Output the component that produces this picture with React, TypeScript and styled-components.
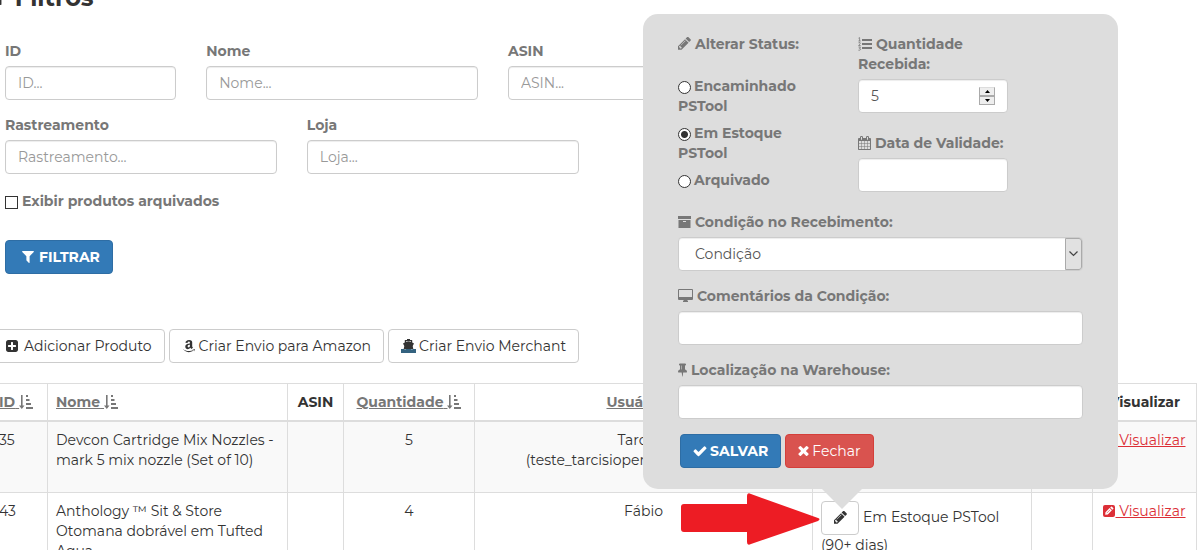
import React, { useState } from "react";
import styled, { createGlobalStyle, css } from "styled-components";
import { FaAmazon } from "react-icons/fa";

const GlobalStyle = createGlobalStyle`
  *, *::before, *::after { box-sizing: border-box; }
  body {
    margin: 0;
    background: #fff;
    color: #333;
    font: 14px/20px Montserrat, Inter, "Liberation Sans", sans-serif;
  }
  button, input, select { font: inherit; }
`;

/* ---------- icons ---------- */

const Svg = styled.svg<{ $w: number }>`
  width: ${(p) => p.$w}px;
  height: 14px;
  vertical-align: -2px;
  fill: currentColor;
  flex: none;
`;

const FilterIcon = ({ w = 12 }: { w?: number }) => (
  <Svg $w={w} viewBox="192 128 1408 1664" aria-hidden>
    <path d="M1595 295q17 41-14 70l-493 493v742q0 42-39 59-13 5-25 5-27 0-45-19l-256-256q-19-19-19-45v-486l-493-493q-31-29-14-70 17-39 59-39h1280q42 0 59 39z" />
  </Svg>
);
const PencilIcon = () => (
  <Svg $w={13} viewBox="128 192 1536 1600" aria-hidden>
    <path d="M491 1536l91-91-235-235-91 91v107h128v128h107zm523-928q0-22-22-22-10 0-17 7l-542 542q-7 7-7 17 0 22 22 22 10 0 17-7l542-542q7-7 7-17zm-54-192l416 416-832 832h-416v-416zm683 96q0 53-37 90l-166 166-416-416 166-165q36-38 90-38 53 0 91 38l235 234q37 39 37 91z" />
  </Svg>
);
const CheckIcon = () => (
  <Svg $w={14} viewBox="64 64 1664 1664" aria-hidden>
    <path d="M1671 566q0 40-28 68l-724 724-136 136q-28 28-68 28t-68-28l-136-136-362-362q-28-28-28-68t28-68l136-136q28-28 68-28t68 28l294 295 656-657q28-28 68-28t68 28l136 136q28 28 28 68z" />
  </Svg>
);
const TimesIcon = () => (
  <Svg $w={11} viewBox="256 192 1280 1536" aria-hidden>
    <path d="M1490 1322q0 40-28 68l-136 136q-28 28-68 28t-68-28l-294-294-294 294q-28 28-68 28t-68-28l-136-136q-28-28-28-68t28-68l294-294-294-294q-28-28-28-68t28-68l136-136q28-28 68-28t68 28l294 294 294-294q28-28 68-28t68 28l136 136q28 28 28 68t-28 68l-294 294 294 294q28 28 28 68z" />
  </Svg>
);
const CalendarIcon = () => (
  <Svg $w={13} viewBox="64 0 1664 1792" aria-hidden>
    <path d="M192 1664h288v-288h-288v288zm352 0h320v-288h-320v288zm-352-352h288v-320h-288v320zm352 0h320v-320h-320v320zm-352-384h288v-288h-288v288zm736 736h320v-288h-320v288zm-384-736h320v-288h-320v288zm768 736h288v-288h-288v288zm-384-352h320v-320h-320v320zm-352-864v-288q0-13-9.5-22.5t-22.5-9.5h-64q-13 0-22.5 9.5t-9.5 22.5v288q0 13 9.5 22.5t22.5 9.5h64q13 0 22.5-9.5t9.5-22.5zm736 864h288v-320h-288v320zm-384-384h320v-288h-320v288zm384 0h288v-288h-288v288zm32-480v-288q0-13-9.5-22.5t-22.5-9.5h-64q-13 0-22.5 9.5t-9.5 22.5v288q0 13 9.5 22.5t22.5 9.5h64q13 0 22.5-9.5t9.5-22.5zm384-64v1280q0 52-38 90t-90 38h-1408q-52 0-90-38t-38-90v-1280q0-52 38-90t90-38h128v-96q0-66 47-113t113-47h64q66 0 113 47t47 113v96h384v-96q0-66 47-113t113-47h64q66 0 113 47t47 113v96h128q52 0 90 38t38 90z" />
  </Svg>
);
const TackIcon = () => (
  <Svg $w={9} viewBox="320 64 1152 1792" aria-hidden>
    <path d="M800 864v-448q0-14-9-23t-23-9-23 9-9 23v448q0 14 9 23t23 9 23-9 9-23zm672 352q0 26-19 45t-45 19h-429l-51 483q-2 12-10.5 20.5t-20.5 8.5h-1q-27 0-32-27l-76-485h-404q-26 0-45-19t-19-45q0-123 78.5-221.5t177.5-98.5v-512q-52 0-90-38t-38-90 38-90 90-38h640q52 0 90 38t38 90-38 90-90 38v512q99 0 177.5 98.5t78.5 221.5z" />
  </Svg>
);
const PlusSquareIcon = () => (
  <Svg $w={12} viewBox="128 0 1536 1792" aria-hidden>
    <path d="M1408 960v-128q0-26-19-45t-45-19h-320v-320q0-26-19-45t-45-19h-128q-26 0-45 19t-19 45v320h-320q-26 0-45 19t-19 45v128q0 26 19 45t45 19h320v320q0 26 19 45t45 19h128q26 0 45-19t19-45v-320h320q26 0 45-19t19-45zm256-544v960q0 119-84.5 203.5t-203.5 84.5h-960q-119 0-203.5-84.5t-84.5-203.5v-960q0-119 84.5-203.5t203.5-84.5h960q119 0 203.5 84.5t84.5 203.5z" />
  </Svg>
);
const ListIcon = () => (
  <Svg $w={14} viewBox="0 0 14 14" aria-hidden>
    <path d="M4 2h10v2H4zM4 6h10v2H4zM4 10h10v2H4z" />
    <path
      d="M.5 1.2L1.6.6V4M.4 4h2.3M.5 5.8q1.8-1 1.8.3Q2.2 7 .6 8.5h2M.5 10h2L1.4 11.4q1.2 0 1.2 1T.4 13.2"
      fill="none"
      stroke="currentColor"
      strokeWidth="0.8"
    />
  </Svg>
);
const ArchiveIcon = () => (
  <Svg $w={13} viewBox="0 0 13 14" aria-hidden>
    <path d="M0 1h13v3H0zM.5 5h12v8H.5zM5 6v1h3V6z" fillRule="evenodd" />
  </Svg>
);
const DesktopIcon = () => (
  <Svg $w={15} viewBox="0 0 15 14" aria-hidden>
    <path
      d="M1 0h13q1 0 1 1v9q0 1-1 1H9.5v1h.5v1H5v-1h.5v-1H1q-1 0-1-1V1q0-1 1-1zm0 1v7h13V1z"
      fillRule="evenodd"
    />
  </Svg>
);
const SortIcon = () => (
  <Svg $w={14} viewBox="0 0 14 14" aria-hidden>
    <path d="M2 0h1.6v10.5H5.5L2.8 14 0 10.5h2zM7 0h2v2H7zM7 4h3.5v2H7zM7 8h5v2H7zM7 12h7v2H7z" />
  </Svg>
);
const EditSquareIcon = () => (
  <Svg $w={12} viewBox="0 0 12 14" aria-hidden>
    <path d="M2 1h8q2 0 2 2v8q0 2-2 2H2q-2 0-2-2V3q0-2 2-2z" />
    <path d="M2.2 10.8l.3-2.6L6.6 4l2.3 2.3-4.1 4.2zM7.2 3.5l.8-.8q.5-.4 1 0l1.2 1.2q.5.5 0 1l-.7.8z" fill="#fff" />
    <path d="M3.8 9.1l3.4-3.4" stroke="currentColor" strokeWidth="0.6" />
  </Svg>
);
const ShipIcon = () => (
  <Svg $w={15} viewBox="0 0 15 14" aria-hidden>
    <path d="M6 0h3v1h2.2v2.6L13 4.6 11.7 7l.6 3H2.7l.6-3L2 4.6l1.8-1V1H6z" />
    <path d="M5 2.2h5v.9L7.5 2.4 5 3.1z" fill="#fff" />
    <path d="M0 10h3l1 .6 1.5-.6h4l1.5.6 1-.6h3v4H0z" fill="#33627f" />
  </Svg>
);

/* ---------- page ---------- */

const Page = styled.main`
  height: 100vh;
  overflow: hidden;
  padding-right: 6px;
`;
const Shifted = styled.div`
  margin-left: -10px;
`;
const Title = styled.h2`
  margin: -19px 0 0;
  padding: 0 0 26px;
  font-size: 24px;
  line-height: 34px;
  font-weight: 700;
  white-space: nowrap;
  svg { height: 24px; }
`;
const Row = styled.div`
  display: grid;
  grid-template-columns: repeat(12, minmax(0, 1fr));
`;
const Col = styled.div<{ $span: number }>`
  grid-column: span ${(p) => p.$span};
  padding: 0 15px;
`;
const Group = styled.div`
  margin-bottom: 15px;
`;
const Label = styled.label`
  display: block;
  margin-bottom: 5px;
  font-weight: 700;
  color: #777;
`;
const field = css`
  width: 100%;
  height: 34px;
  border: 1px solid #ccc;
  border-radius: 4px;
  background: #fff;
  color: #555;
  box-shadow: inset 0 1px 1px rgba(0, 0, 0, 0.075);
`;
const Input = styled.input`
  ${field}
  display: block;
  padding: 6px 12px;
  &::placeholder { color: #999; opacity: 1; }
`;
const CheckLabel = styled.label`
  display: flex;
  align-items: center;
  gap: 4px;
  margin: 2px 15px 29px;
  font-weight: 700;
  color: #777;
`;
const Checkbox = styled.input`
  appearance: none;
  width: 13px;
  height: 13px;
  margin: 2px 0 0;
  border: 1px solid #333;
  background: #fff;
  &:checked { background: #333; }
`;
const Button = styled.button<{ $kind?: "primary" | "danger"; $gap?: number }>`
  height: 34px;
  padding: 0 12px;
  display: inline-flex;
  align-items: center;
  justify-content: center;
  gap: ${(p) => p.$gap ?? 3}px;
  border: 1px solid #ccc;
  border-radius: 4px;
  background: #fff;
  color: #333;
  white-space: nowrap;
  cursor: pointer;
  ${(p) => p.$kind === "primary" && css`
    background: #337ab7; border-color: #2e6da4; color: #fff; font-weight: 700;
  `}
  ${(p) => p.$kind === "danger" && css`
    background: #d9534f; border-color: #d43f3a; color: #fff;
  `}
`;
const FilterButton = styled(Button)`
  padding-left: 16px;
`;
const Actions = styled.div`
  padding-left: 15px;
`;
const Toolbar = styled.div`
  display: flex;
  gap: 4px;
  padding: 55px 0 20px 3px;
`;

/* ---------- table ---------- */

const Table = styled.table`
  width: 100%;
  table-layout: fixed;
  border-collapse: collapse;
`;
const Column = styled.col<{ $w?: number }>`
  width: ${(p) => (p.$w ? `${p.$w}px` : "auto")};
`;
const Th = styled.th<{ $left?: boolean }>`
  padding: 8px;
  border: 1px solid #ddd;
  border-bottom-width: 2px;
  text-align: ${(p) => (p.$left ? "left" : "center")};
  white-space: nowrap;
`;
const Td = styled.td<{ $left?: boolean }>`
  height: 71px;
  padding: 8px;
  border: 1px solid #ddd;
  text-align: ${(p) => (p.$left ? "left" : "center")};
  vertical-align: top;
`;
const Tr = styled.tr<{ $striped?: boolean }>`
  background: ${(p) => (p.$striped ? "#f9f9f9" : "#fff")};
`;
const SortLink = styled.a`
  color: #777;
  text-decoration: underline;
  white-space: pre;
`;
const ViewLink = styled.a`
  color: #dc2f37;
  text-decoration: underline;
  white-space: pre;
`;

/* ---------- status popover ---------- */

const Anchor = styled.span`
  position: relative;
  display: inline-block;
  margin-right: 4px;
`;
const EditButton = styled(Button)`
  width: 38px;
  padding: 0;
  vertical-align: middle;
`;
const Popover = styled.form`
  position: absolute;
  z-index: 2;
  bottom: calc(100% + 12px);
  left: -178px;
  width: 475px;
  padding: 20px 35px 21px;
  border-radius: 15px;
  background: #ddd;
  text-align: left;
  &::after {
    content: "";
    position: absolute;
    top: 100%;
    left: 179px;
    border: 20px solid transparent;
    border-top-color: #ddd;
    border-bottom: 0;
  }
`;
const PopoverTop = styled.div`
  display: flex;
  gap: 30px;
  margin-bottom: 5px;
`;
const Half = styled.div`
  width: 150px;
`;
const Choices = styled.fieldset`
  width: 150px;
  margin: 0;
  padding: 0;
  border: 0;
`;
const Legend = styled.legend`
  padding: 0;
  margin-bottom: 22px;
  font-weight: 700;
  color: #777;
`;
const Choice = styled.label`
  display: block;
  width: 130px;
  margin-bottom: 7px;
  font-weight: 700;
  color: #777;
`;
const Radio = styled.input`
  appearance: none;
  width: 13px;
  height: 13px;
  margin: 0 3px 0 0;
  border: 1px solid #333;
  border-radius: 50%;
  background: #fff;
  vertical-align: -3px;
  &:checked { background: radial-gradient(circle, #333 0 3px, #fff 4px); }
`;
const NumberField = styled.div`
  ${field}
  display: flex;
  align-items: center;
  margin-bottom: 20px;
  padding: 0 12px;
`;
const NumberInput = styled.input`
  flex: 1;
  min-width: 0;
  padding: 0;
  border: 0;
  outline: 0;
  background: none;
  color: inherit;
  appearance: textfield;
  &::-webkit-inner-spin-button { appearance: none; }
`;
const Stepper = styled.div`
  display: grid;
  width: 16px;
`;
const Step = styled.button<{ $down?: boolean }>`
  display: grid;
  place-items: center;
  height: 9px;
  padding: 0;
  border: 1px solid #aaa;
  ${(p) => !p.$down && css`border-top-color: #ddd;`}
  background: #eee;
  svg {
    display: block;
    transform: ${(p) => (p.$down ? "rotate(180deg)" : "none")};
  }
`;
const SelectBox = styled.div`
  position: relative;
`;
const Select = styled.select`
  ${field}
  appearance: none;
  display: block;
  padding: 0 28px 0 16px;
`;
const SelectArrow = styled.span`
  position: absolute;
  top: 1px;
  right: 1px;
  bottom: 1px;
  width: 17px;
  display: grid;
  place-items: center;
  border: 1px solid #aaa;
  border-radius: 0 3px 3px 0;
  background: #e1e1e1;
  pointer-events: none;
`;
const PopoverActions = styled.div`
  display: flex;
  gap: 4px;
  padding-left: 2px;
`;
const RedArrow = styled.svg`
  position: absolute;
  z-index: 1;
  top: -8px;
  right: 39px;
  width: 140px;
  height: 52px;
  fill: #ed1c24;
`;

function StepArrow() {
  return (
    <svg width="5" height="3" viewBox="0 0 5 3" aria-hidden>
      <path d="M0 3h5L2.5 0z" fill="#000" />
    </svg>
  );
}

function StatusPopover() {
  const [status, setStatus] = useState("Em Estoque PSTool");
  const [amount, setAmount] = useState(5);
  return (
    <Popover onSubmit={(e) => e.preventDefault()}>
      <PopoverTop>
        <Choices>
          <Legend><PencilIcon /> Alterar Status:</Legend>
          {["Encaminhado PSTool", "Em Estoque PSTool", "Arquivado"].map((s) => (
            <Choice key={s}>
              <Radio type="radio" name="status" checked={status === s} onChange={() => setStatus(s)} />
              {s}
            </Choice>
          ))}
        </Choices>
        <Half>
          <Label htmlFor="amount"><ListIcon /> Quantidade Recebida:</Label>
          <NumberField>
            <NumberInput id="amount" type="number" value={amount} onChange={(e) => setAmount(Number(e.target.value))} />
            <Stepper>
              <Step type="button" aria-label="Aumentar" onClick={() => setAmount(amount + 1)}><StepArrow /></Step>
              <Step type="button" aria-label="Diminuir" $down onClick={() => setAmount(amount - 1)}><StepArrow /></Step>
            </Stepper>
          </NumberField>
          <Group>
            <Label htmlFor="expiry"><CalendarIcon /> Data de Validade:</Label>
            <Input id="expiry" />
          </Group>
        </Half>
      </PopoverTop>
      <Group>
        <Label htmlFor="condition"><ArchiveIcon /> Condição no Recebimento:</Label>
        <SelectBox>
          <Select id="condition"><option>Condição</option></Select>
          <SelectArrow>
            <svg width="9" height="6" viewBox="0 0 9 6" aria-hidden>
              <path d="M.5.5l4 4 4-4" fill="none" stroke="#444" strokeWidth="1.2" />
            </svg>
          </SelectArrow>
        </SelectBox>
      </Group>
      <Group>
        <Label htmlFor="comments"><DesktopIcon /> Comentários da Condição:</Label>
        <Input id="comments" />
      </Group>
      <Group>
        <Label htmlFor="place"><TackIcon /> Localização na Warehouse:</Label>
        <Input id="place" />
      </Group>
      <PopoverActions>
        <Button type="submit" $kind="primary"><CheckIcon />SALVAR</Button>
        <Button type="button" $kind="danger"><TimesIcon />Fechar</Button>
      </PopoverActions>
    </Popover>
  );
}

function FilterField({ id, label, span }: { id: string; label: string; span: number }) {
  return (
    <Col $span={span}>
      <Group>
        <Label htmlFor={id}>{label}</Label>
        <Input id={id} placeholder={`${label}...`} />
      </Group>
    </Col>
  );
}

const SortHead = ({ children }: { children: string }) => (
  <SortLink href="#">{children} <SortIcon /></SortLink>
);
const View = () => (
  <ViewLink href="#"><EditSquareIcon /> Visualizar</ViewLink>
);

export default function App() {
  return (
    <>
      <GlobalStyle />
      <Page>
        <Shifted>
          <Title><FilterIcon w={18} /> Filtros</Title>
          <Row>
            <FilterField id="f-id" label="ID" span={2} />
            <FilterField id="f-nome" label="Nome" span={3} />
            <FilterField id="f-asin" label="ASIN" span={3} />
          </Row>
          <Row>
            <FilterField id="f-rastreamento" label="Rastreamento" span={3} />
            <FilterField id="f-loja" label="Loja" span={3} />
          </Row>
          <CheckLabel><Checkbox type="checkbox" />Exibir produtos arquivados</CheckLabel>
          <Actions>
            <FilterButton $kind="primary" $gap={5}><FilterIcon /> FILTRAR</FilterButton>
          </Actions>
          <Toolbar>
            <Button $gap={6}><PlusSquareIcon /> Adicionar Produto</Button>
            <Button><FaAmazon size={14} /> Criar Envio para Amazon</Button>
            <Button><ShipIcon /> Criar Envio Merchant</Button>
          </Toolbar>
          <Table>
            <colgroup>
              <Column $w={57} />
              <Column $w={240} />
              <Column $w={56} />
              <Column $w={131} />
              <Column />
              <Column $w={219} />
              <Column $w={61} />
              <Column $w={104} />
            </colgroup>
            <thead>
              <Tr>
                <Th $left><SortHead>ID</SortHead></Th>
                <Th $left><SortHead>Nome</SortHead></Th>
                <Th>ASIN</Th>
                <Th><SortHead>Quantidade</SortHead></Th>
                <Th><SortHead>Usuário</SortHead></Th>
                <Th>Status</Th>
                <Th />
                <Th>Visualizar</Th>
              </Tr>
            </thead>
            <tbody>
              <Tr $striped>
                <Td $left>35</Td>
                <Td $left>Devcon Cartridge Mix Nozzles - mark 5 mix nozzle (Set of 10)</Td>
                <Td />
                <Td>5</Td>
                <Td>Tarcisio<br />(teste_tarcisiopenna@testes.com)</Td>
                <Td />
                <Td />
                <Td><View /></Td>
              </Tr>
              <Tr>
                <Td $left>43</Td>
                <Td $left>Anthology ™ Sit &amp; Store Otomana dobrável em Tufted Aqua</Td>
                <Td />
                <Td>4</Td>
                <Td>Fábio</Td>
                <Td $left>
                  <Anchor>
                    <EditButton aria-label="Alterar status"><PencilIcon /></EditButton>
                    <RedArrow viewBox="0 0 140 52" aria-hidden>
                      <path d="M1 14q0-3 3-3h63V3q0-4 4-2l67 24q3 1 0 3L71 51q-4 2-4-2V39H4q-3 0-3-3z" />
                    </RedArrow>
                    <StatusPopover />
                  </Anchor>
                  Em Estoque PSTool (90+ dias)
                </Td>
                <Td />
                <Td><View /></Td>
              </Tr>
            </tbody>
          </Table>
        </Shifted>
      </Page>
    </>
  );
}
